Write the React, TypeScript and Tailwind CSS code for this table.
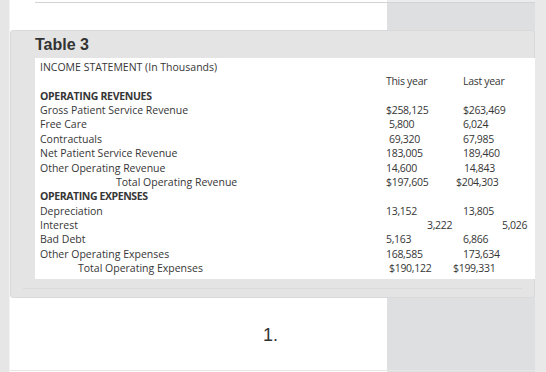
import React from "react";

type Row = {
  label: string;
  lcls?: string;
  v1?: string;
  c1?: string;
  v2?: string;
  c2?: string;
};

const rows: Row[] = [
  { label: "INCOME STATEMENT (In Thousands)" },
  { label: "", v1: "This year", v2: "Last year" },
  { label: "OPERATING REVENUES", lcls: "font-bold tracking-[-0.3px]" },
  { label: "Gross Patient Service Revenue", v1: "$258,125", v2: "$263,469" },
  { label: "Free Care", v1: "5,800", c1: "ml-[3px]", v2: "6,024" },
  { label: "Contractuals", v1: "69,320", c1: "ml-[3px]", v2: "67,985" },
  { label: "Net Patient Service Revenue", v1: "183,005", v2: "189,460" },
  { label: "Other Operating Revenue", v1: "14,600", v2: "14,843", c2: "ml-[1px]" },
  { label: "Total Operating Revenue", lcls: "pl-[76px]", v1: "$197,605", v2: "$204,303", c2: "-ml-[7px]" },
  { label: "OPERATING EXPENSES", lcls: "font-bold tracking-[-0.4px]" },
  { label: "Depreciation", v1: "13,152", v2: "13,805" },
  { label: "Interest", v1: "3,222", c1: "ml-[41px]", v2: "5,026", c2: "ml-[39px]" },
  { label: "Bad Debt", v1: "5,163", v2: "6,866" },
  { label: "Other Operating Expenses", v1: "168,585", v2: "173,634" },
  { label: "Total Operating Expenses", lcls: "pl-[38px]", v1: "$190,122", c1: "ml-[3px]", v2: "$199,331", c2: "-ml-[10px]" },
];

export default function App() {
  return (
    <div className="w-[546px] h-[372px] overflow-hidden bg-[linear-gradient(to_right,#e6e6e6_0px,#e6e6e6_9px,#f3f3f3_9px,#f3f3f3_10px,#ffffff_10px,#ffffff_387px,#dedfe1_387px,#dedfe1_535px,#e9e9e9_535px)] font-['Liberation_Sans',Arial,sans-serif]">
      {/* previous card stub */}
      <div className="ml-[35px] w-[500px] h-[3px] bg-white/40 border-b border-[#d3d3d3]" />

      {/* Table 3 panel */}
      <div className="mt-[27px] ml-[10px] w-[525px] h-[268px] bg-[#e4e4e4] border border-[#d9d9d9] rounded-[3px] flex flex-col">
        <div className="pl-[24px] pt-[4px] h-[27px] text-[16px] leading-[20px] font-bold text-[#333]">
          Table 3
        </div>
        <div className="ml-[24px] w-[500px] h-[221px] bg-white pt-[2px] pl-[5px] text-[#363636] font-['Open_Sans',sans-serif] text-[10.5px]">
          {rows.map((r, i) => (
            <div key={i} className="flex h-[14.36px] leading-[14.36px] whitespace-nowrap">
              <div className={`w-[346px] ${r.lcls ?? ""}`}>{r.label}</div>
              <div className="w-[77px] tracking-[-0.3px]">
                {r.v1 && <span className={`inline-block ${r.c1 ?? ""}`}>{r.v1}</span>}
              </div>
              <div className="flex-1 tracking-[-0.3px]">
                {r.v2 && <span className={`inline-block ${r.c2 ?? ""}`}>{r.v2}</span>}
              </div>
            </div>
          ))}
        </div>
        <div className="mt-[9px] mx-[12px] border-t border-[#dadada]" />
      </div>

      {/* footer number */}
      <div className="ml-[10px] w-[377px] h-[72px] flex items-center pl-[253px] pt-[2px] text-[18px] text-[#333] font-['Liberation_Sans',Arial,sans-serif]">
        1.
      </div>
      <div className="ml-[10px] w-[525px] border-t border-[#e6e6e6]" />
    </div>
  );
}
